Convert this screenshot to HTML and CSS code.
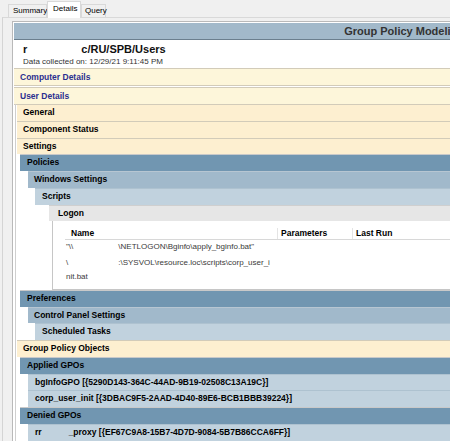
FILE: index.html
```html
<!DOCTYPE html>
<html>
<head>
<meta charset="utf-8">
<link rel="stylesheet" href="styles.css">
</head>
<body>
<div class="tabs">
  <div class="tab">Summary</div>
  <div class="tab active">Details</div>
  <div class="tab">Query</div>
</div>
<div class="panel">
  <div class="report">
    <div class="title-bar">Group Policy Modeling</div>
    <div class="summary">
      <div class="scope">r<span class="redact r1"></span>c/RU/SPB/Users</div>
      <div class="collected">Data collected on: 12/29/21 9:11:45 PM</div>
    </div>
    <div class="row he0 first">Computer Details</div>
    <div class="row he0">User Details</div>
    <div class="sub">
      <div class="row he1">General</div>
      <div class="row he1">Component Status</div>
      <div class="row he1">Settings</div>
      <div class="c1">
        <div class="row he2">Policies</div>
        <div class="c2">
          <div class="row he3">Windows Settings</div>
          <div class="c3">
            <div class="row he4">Scripts</div>
            <div class="c4">
              <div class="row he5">Logon</div>
              <div class="tablebox">
                <table class="info">
                  <thead>
                    <tr><th class="col-name">Name</th><th class="col-par">Parameters</th><th class="col-run">Last Run</th></tr>
                  </thead>
                  <tbody>
                    <tr><td>"\\<span class="redact r2"></span>\NETLOGON\Bginfo\apply_bginfo.bat"</td><td></td><td></td></tr>
                    <tr><td>\<span class="redact r3"></span>:\SYSVOL\resource.loc\scripts\corp_user_i<br>nit.bat</td><td></td><td></td></tr>
                  </tbody>
                </table>
              </div>
            </div>
          </div>
        </div>
        <div class="row he2">Preferences</div>
        <div class="c2">
          <div class="row he3">Control Panel Settings</div>
          <div class="c3">
            <div class="row he4">Scheduled Tasks</div>
          </div>
        </div>
      </div>
      <div class="row he1">Group Policy Objects</div>
      <div class="c1">
        <div class="row he2">Applied GPOs</div>
        <div class="c2">
          <div class="row he4">bgInfoGPO [{5290D143-364C-44AD-9B19-02508C13A19C}]</div>
          <div class="row he4">corp_user_init [{3DBAC9F5-2AAD-4D40-89E6-BCB1BBB39224}]</div>
        </div>
        <div class="row he2">Denied GPOs</div>
        <div class="c2">
          <div class="row he4">rr<span class="redact r4"></span>_proxy [{EF67C9A8-15B7-4D7D-9084-5B7B86CCA6FF}]</div>
          <div class="row he4">&nbsp;</div>
        </div>
      </div>
    </div>
  </div>
</div>
</body>
</html>
```
FILE: styles.css
```css
html, body {
  margin: 0;
  padding: 0;
  overflow: hidden;
  width: 450px;
  height: 441px;
}
body {
  background: #f0f0f0;
  font-family: "Liberation Sans", Arial, sans-serif;
  color: #000;
}
.tabs {
  display: flex;
  align-items: flex-end;
  height: 17px;
  padding-left: 8px;
  box-sizing: border-box;
}
.tab {
  box-sizing: border-box;
  height: 13px;
  border: 1px solid #d9d9d9;
  border-bottom: none;
  background: #f0f0f0;
  font-size: 8px;
  line-height: 12px;
  padding: 0 3px;
  color: #000;
  margin-right: -1px;
}
.tab:first-child { width: 39px; padding-left: 4px; }
.tab.active {
  height: 17px;
  width: 34px;
  padding-left: 5px;
  line-height: 13px;
  background: #fff;
  margin-bottom: -1px;
  margin-left: 1px;
  margin-right: 0;
  position: relative;
  z-index: 1;
}
.tab:last-child { width: 25px; padding-left: 3px; }
.panel {
  margin-left: 2px;
  border-left: 1px solid #d4d4d4;
  border-top: 1px solid #d9d9d9;
  padding: 3px 0 0 9px;
}
.report {
  width: 456px;
  background: #fff;
  border-left: 1px solid #b9b9b9;
  border-top: 1px solid #b9b9b9;
  padding: 1px 0 0 1px;
}
.title-bar {
  height: 16px;
  background: #a2b9ca;
  border-bottom: 1px solid #6b7f8e;
  text-align: right;
  padding-right: 6px;
  font-size: 11px;
  font-weight: bold;
  line-height: 16px;
  color: #333;
  white-space: nowrap;
}
.summary {
  padding: 3px 0 1px 9px;
}
.scope {
  font-size: 11px;
  font-weight: bold;
  line-height: 13px;
  color: #111;
}
.collected {
  margin-top: 1px;
  font-size: 8px;
  line-height: 10px;
  color: #333;
}
.redact { display: inline-block; }
.r1 { width: 54px; }
.r2 { width: 45px; }
.r3 { width: 50px; }
.r4 { width: 27px; }

.row {
  box-sizing: border-box;
  height: 16.75px;
  border-top: 1px solid #d2cbb9;
  font-size: 8.5px;
  font-weight: bold;
  line-height: 15.75px;
  white-space: nowrap;
}
.he0 {
  background: #fdf6da;
  color: #2b2f8f;
  padding-left: 6px;
  height: 18px;
  border-bottom: 1px solid #d2cbb9;
  line-height: 16px;
}
.he0.first { margin-bottom: 1px; }
.he0 + .sub { margin-top: -1px; }
.sub {
  margin-left: 1px;
  border-left: 1px solid #cfcfcf;
  padding-left: 1px;
}
.he1 {
  background: #fdefd0;
  padding-left: 6px;
}
.c1 { margin-left: 3px; }
.c2 { margin-left: 8px; }
.c3 { margin-left: 7px; }
.c4 { margin-left: 14px; }
.he2 {
  background: #7196b1;
  border-top-color: #c9c9c9;
  padding-left: 7px;
}
.he3 {
  background: #a1b9cb;
  border-top-color: #b7c6d2;
  padding-left: 6px;
}
.he4 {
  background: #c1d2de;
  border-top-color: #aec2d0;
  padding-left: 7px;
}
.he5 {
  background: #e6e6e6;
  border-top-color: #cfcfcf;
  padding-left: 9px;
}
.tablebox {
  margin-left: 3px;
  background: #fff;
  border-left: 1px solid #c6c6c6;
  border-bottom: 1px solid #c6c6c6;
  padding: 7px 0 3px 12px;
}
.info {
  border-collapse: collapse;
  width: 100%;
  font-size: 8px;
}
.info th {
  font-size: 8.5px;
  font-weight: bold;
  text-align: left;
  line-height: 11px;
  padding: 0 0 0 3px;
  border-bottom: 1px solid #d8d8d8;
  border-left: 1px solid #e4e4e4;
}
.info th.col-name {
  width: 206px;
  padding-left: 6px;
  border-left: none;
}
.info th.col-par { width: 71px; }
.info td {
  vertical-align: top;
  line-height: 14.5px;
  padding: 0 0 1px 1px;
  color: #3a3a3a;
}
```
